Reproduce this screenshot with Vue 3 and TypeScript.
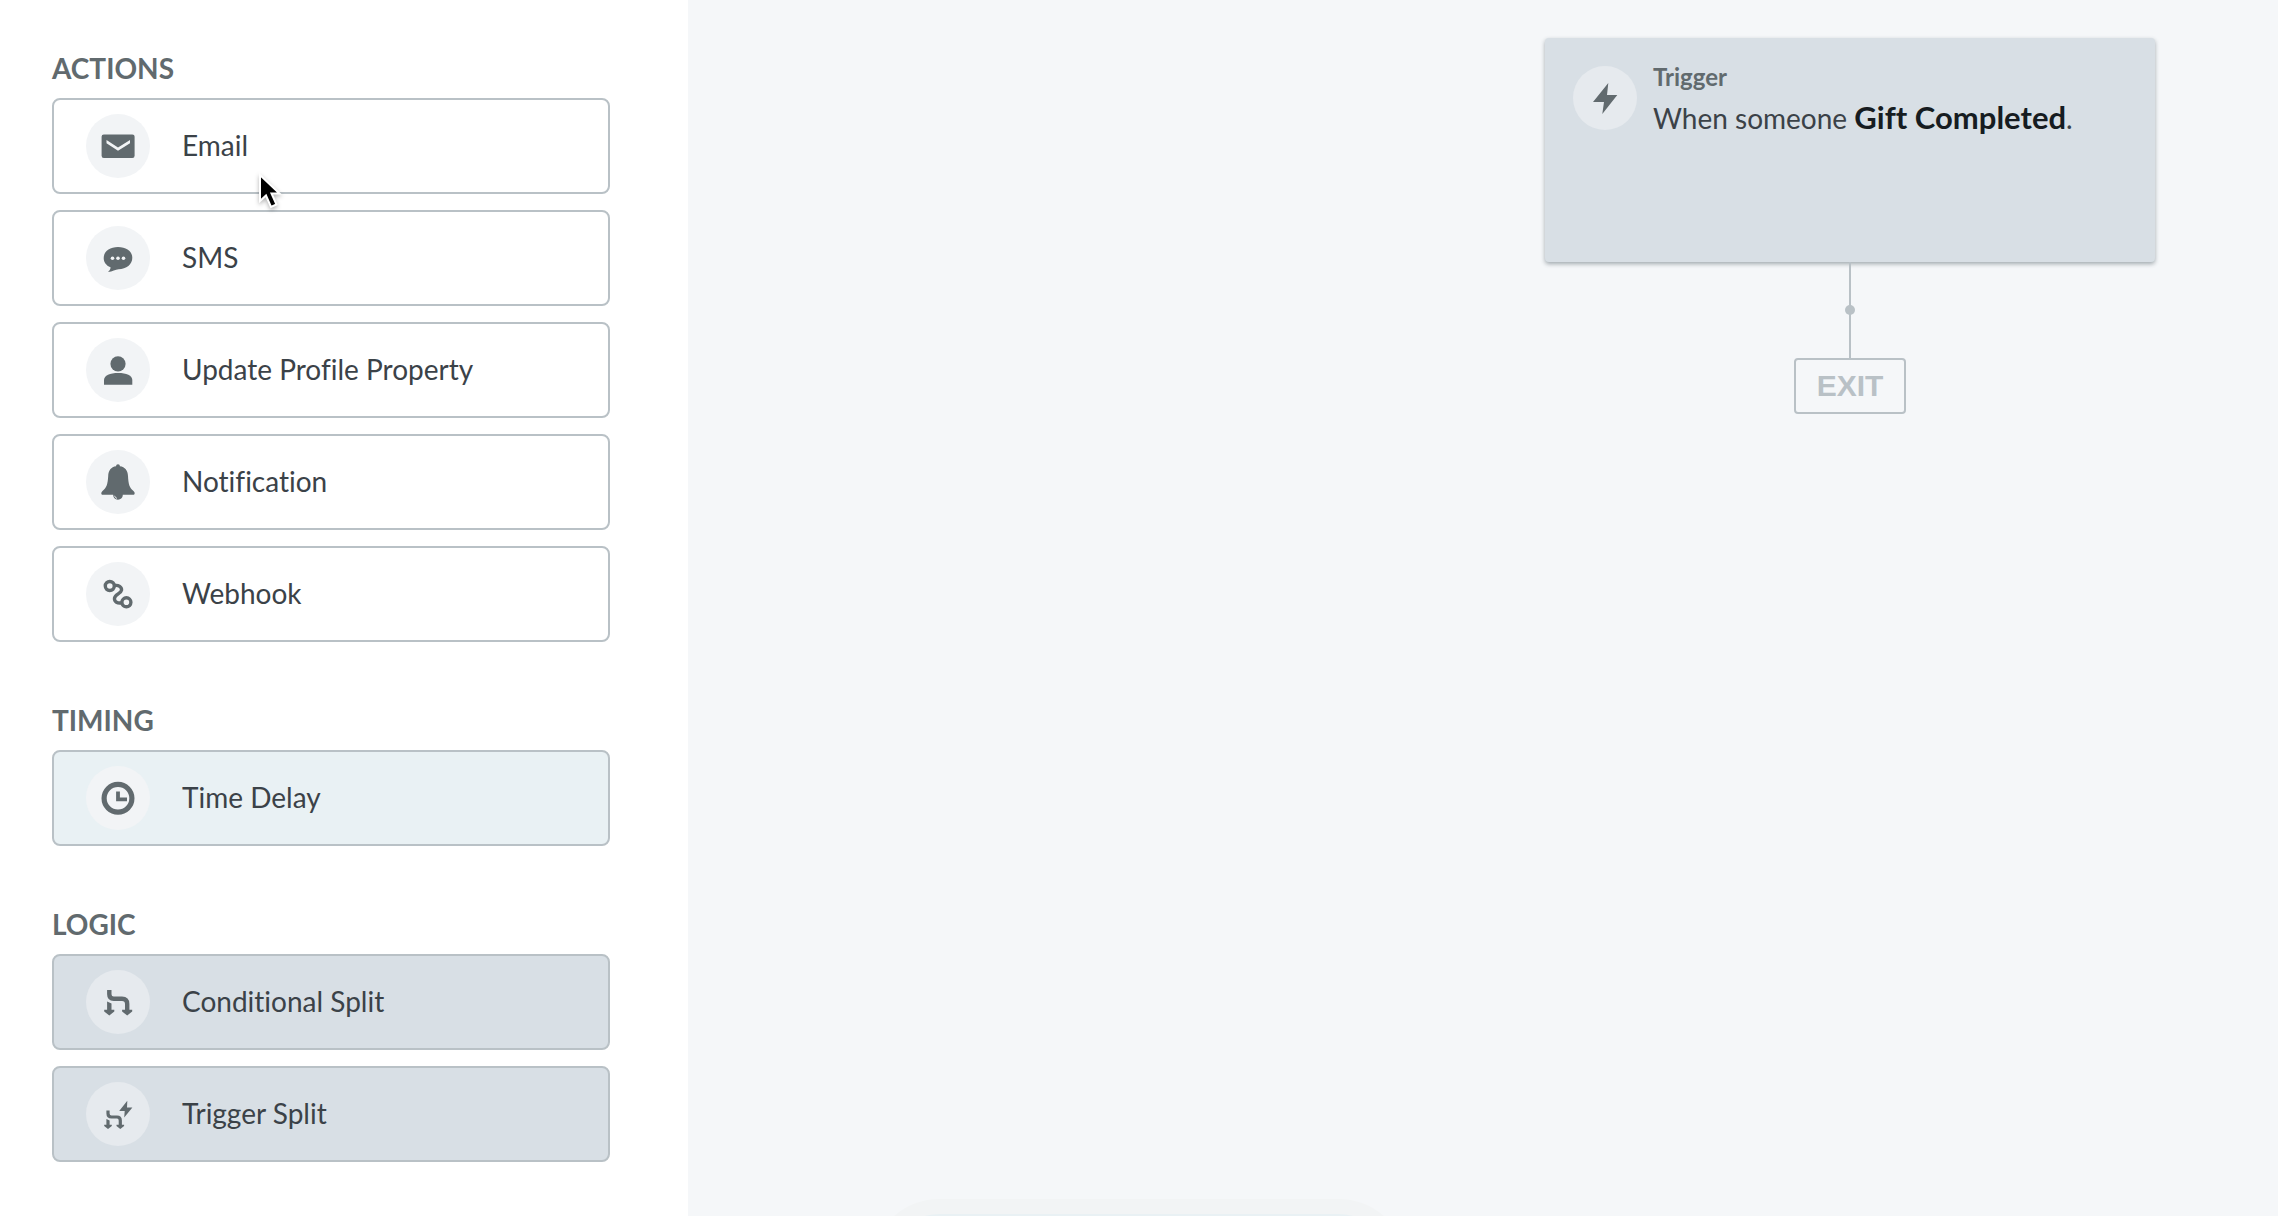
<script setup lang="ts">
type IconName = 'email' | 'sms' | 'profile' | 'bell' | 'webhook' | 'clock' | 'split' | 'trigger-split'
type Tone = 'plain' | 'timing' | 'logic'

interface Item {
  label: string
  icon: IconName
}

interface Group {
  title: string
  tone: Tone
  items: Item[]
}

const groups: Group[] = [
  {
    title: 'ACTIONS',
    tone: 'plain',
    items: [
      { label: 'Email', icon: 'email' },
      { label: 'SMS', icon: 'sms' },
      { label: 'Update Profile Property', icon: 'profile' },
      { label: 'Notification', icon: 'bell' },
      { label: 'Webhook', icon: 'webhook' },
    ],
  },
  { title: 'TIMING', tone: 'timing', items: [{ label: 'Time Delay', icon: 'clock' }] },
  {
    title: 'LOGIC',
    tone: 'logic',
    items: [
      { label: 'Conditional Split', icon: 'split' },
      { label: 'Trigger Split', icon: 'trigger-split' },
    ],
  },
]
</script>

<template>
  <div class="builder">
    <aside class="sidebar">
      <section v-for="group in groups" :key="group.title" class="group">
        <h2 class="group-title">{{ group.title }}</h2>
        <button
          v-for="item in group.items"
          :key="item.label"
          type="button"
          class="item"
          :class="group.tone"
        >
          <svg class="icon" viewBox="0 0 64 64" aria-hidden="true">
            <circle class="disc" cx="32" cy="32" r="32" />
            <g v-if="item.icon === 'email'">
              <rect class="fill" x="15.6" y="20.6" width="33" height="23.4" rx="2.2" />
              <path d="M20.5 26 32 33.6 44 26V29.2L32 36.8 20.5 29.2Z" fill="#f2f4f6" />
            </g>
            <g v-else-if="item.icon === 'sms'">
              <path class="fill" d="M32 21C40.5 21 46.3 25.5 46.3 31.8 46.3 38.5 40.5 43 32.5 43.2 29.5 43.3 26.5 45.8 22 46 23.5 44.5 24.8 43 24.5 41.3 20 39.5 17.7 36 17.7 32 17.7 25.5 23.5 21 32 21Z" />
              <g fill="#f2f4f6">
                <circle cx="26.5" cy="32.2" r="1.8" />
                <circle cx="32" cy="32.2" r="1.8" />
                <circle cx="37.5" cy="32.2" r="1.8" />
              </g>
            </g>
            <g v-else-if="item.icon === 'profile'" class="fill">
              <circle cx="32" cy="25.8" r="7.6" />
              <path d="M18 46.7V42C18 37.5 24 35 32.2 35S46.3 37.5 46.3 42V46.7Z" />
            </g>
            <g v-else-if="item.icon === 'bell'">
              <path class="fill" d="M32 14.2C33.2 14.2 33.9 14.9 33.9 16.2 39 16.8 41.8 20.5 42 26 42.4 34 43.5 38 47.5 41 49.3 42.8 48.9 44.8 47.3 44.8H36.8C36.8 47.5 34.9 49.7 32 49.7S27.2 47.5 27.2 44.8H16.7C15.1 44.8 14.7 42.8 16.5 41 20.5 38 21.8 34 22.2 26 22.4 20.5 25 16.8 30.1 16.2 30.1 14.9 30.8 14.2 32 14.2Z" />
              <path d="M28.7 45.8C29 47.2 29.8 48 31 48.3" fill="none" stroke="#f2f4f6" stroke-width="1" />
            </g>
            <g v-else-if="item.icon === 'webhook'" class="stroke" stroke-width="3.4">
              <circle cx="23.8" cy="24" r="4.5" />
              <circle cx="40.4" cy="40.3" r="4.5" />
              <path d="M28.3 23.6C32.500 22.600 36 25 35.500 28.300 35 31.600 28.900 32.400 28.500 36.200 28.200 39.700 31.500 41.800 35.900 40.800" />
            </g>
            <g v-else-if="item.icon === 'clock'" class="stroke">
              <circle cx="32" cy="32.3" r="13.9" stroke-width="5.2" />
              <path d="M32 25.5V33.3H41" stroke-width="3.8" />
            </g>
            <g v-else-if="item.icon === 'split'">
              <path class="stroke" stroke-width="4.4" d="M23.3 20V24.3Q23.3 28.7 27.7 28.7H36Q41.2 28.7 41.2 34V41" />
              <path class="fill" d="M21.1 31.5 25.5 33.5V39.8H28.3V41.5L23.3 45.5 18.2 41.5V39.8H21.1Z" />
              <path class="fill" d="M36.1 39.8H46.2V41.5L41.2 45.5 36.1 41.5Z" />
            </g>
            <g v-else>
              <path class="stroke" stroke-width="3.2" d="M22 28.5V31.5Q22 35 25.5 35H31Q34.3 35 34.3 38.5V43" />
              <path class="fill" d="M20.4 37 23.6 38.5V42.7H25.8V44L22 47 18.2 44V42.7H20.4Z" />
              <path class="fill" d="M30.5 42.7H38.1V44L34.3 47 30.5 44Z" />
              <path class="fill" d="M41.3 18.8 33.2 29H38.7L38.2 35.5 46.4 25.5H41Z" />
            </g>
          </svg>
          <span class="label">{{ item.label }}</span>
        </button>
      </section>
    </aside>

    <main class="canvas">
      <div class="flow">
        <article class="trigger">
          <svg class="icon" viewBox="0 0 64 64" aria-hidden="true">
            <circle class="disc" cx="32" cy="32" r="32" />
            <path class="fill" d="M35.3 17 20 36H31L29.3 48 44.3 29H34Z" />
          </svg>
          <div>
            <p class="kind">Trigger</p>
            <p class="summary">When someone <strong>Gift Completed</strong>.</p>
          </div>
        </article>
        <div class="connector"><span class="dot"></span></div>
        <div class="exit">EXIT</div>
      </div>
      <div class="drop-hint"></div>
    </main>

    <svg class="pointer" viewBox="0 0 26 38" aria-hidden="true">
      <path d="M3 3V29L9 23.5 14 35 19.5 32.5 14.5 21.5H22.5Z" fill="#000" stroke="#fff" stroke-width="2" />
    </svg>
  </div>
</template>

<style>
body {
  margin: 0;
}
</style>

<style scoped>
.builder {
  position: relative;
  display: flex;
  min-height: 100vh;
  font-family: Lato, "Liberation Sans", sans-serif;
  font-variant-ligatures: none;
  color: #3b4248;
}

.sidebar {
  box-sizing: border-box;
  flex: 0 0 688px;
  display: flex;
  flex-direction: column;
  gap: 64px;
  padding: 54px 78px 54px 52px;
  background: #fff;
}

.group {
  display: flex;
  flex-direction: column;
  gap: 16px;
}

.group-title {
  margin: 0;
  font-size: 28px;
  line-height: 28px;
  font-weight: 700;
  color: #616a6e;
}

.item {
  box-sizing: border-box;
  display: flex;
  align-items: center;
  gap: 32px;
  height: 96px;
  padding: 0 32px;
  border: 2px solid #b9c1c6;
  border-radius: 8px;
  background: #fff;
  font: inherit;
  font-variant-ligatures: none;
  font-size: 28px;
  line-height: 36px;
  color: inherit;
  text-align: left;
  cursor: grab;
}

.item.timing {
  background: #e9f1f4;
}

.item.logic {
  background: #d8dfe5;
}

.label {
  padding-bottom: 2px;
}

.icon {
  flex: none;
  width: 64px;
  height: 64px;
}

.disc {
  fill: #f2f4f6;
}

.logic .disc,
.trigger .disc {
  fill: #e6eaee;
}

.fill {
  fill: #616a6e;
}

.stroke {
  fill: none;
  stroke: #616a6e;
}

.canvas {
  position: relative;
  flex: 1;
  display: flex;
  justify-content: flex-end;
  align-items: flex-start;
  padding: 38px 123px 0 0;
  overflow: hidden;
  background: #f5f7f9;
}

.flow {
  display: flex;
  flex-direction: column;
  align-items: center;
  width: 610px;
}

.trigger {
  box-sizing: border-box;
  display: flex;
  align-items: flex-start;
  gap: 16px;
  width: 100%;
  min-height: 224px;
  padding: 28px;
  border-radius: 4px;
  background: #d8dfe5;
  box-shadow: 0 2px 4px rgba(60, 75, 85, 0.45);
}

.kind,
.summary {
  margin: 0;
}

.kind {
  font-size: 24px;
  line-height: 22px;
  font-weight: 700;
  color: #616a6e;
}

.summary {
  font-size: 28px;
  line-height: 58px;
}

.summary strong {
  font-size: 31px;
  font-weight: 700;
  color: #161c21;
}

.connector {
  display: flex;
  align-items: center;
  justify-content: center;
  width: 2px;
  height: 96px;
  background: #b9c1c6;
}

.dot {
  flex: none;
  width: 10px;
  height: 10px;
  border-radius: 50%;
  background: #b9c1c6;
}

.exit {
  box-sizing: border-box;
  min-width: 112px;
  border: 2px solid #b9c1c6;
  border-radius: 4px;
  font-family: "Liberation Sans", sans-serif;
  font-size: 30px;
  line-height: 52px;
  font-weight: 700;
  text-align: center;
  color: #b9c1c6;
}

/* Drop target that peeks in from below the fold */
.drop-hint {
  position: absolute;
  left: 182px;
  bottom: -123px;
  box-sizing: border-box;
  width: 538px;
  height: 140px;
  border: 15px solid #f2f4f5;
  border-radius: 70px;
  background: #e9f1f4;
}

.pointer {
  position: absolute;
  left: 257px;
  top: 172px;
  width: 26px;
  height: 38px;
  filter: drop-shadow(0 2px 2px rgba(0, 0, 0, 0.3));
  pointer-events: none;
}
</style>
